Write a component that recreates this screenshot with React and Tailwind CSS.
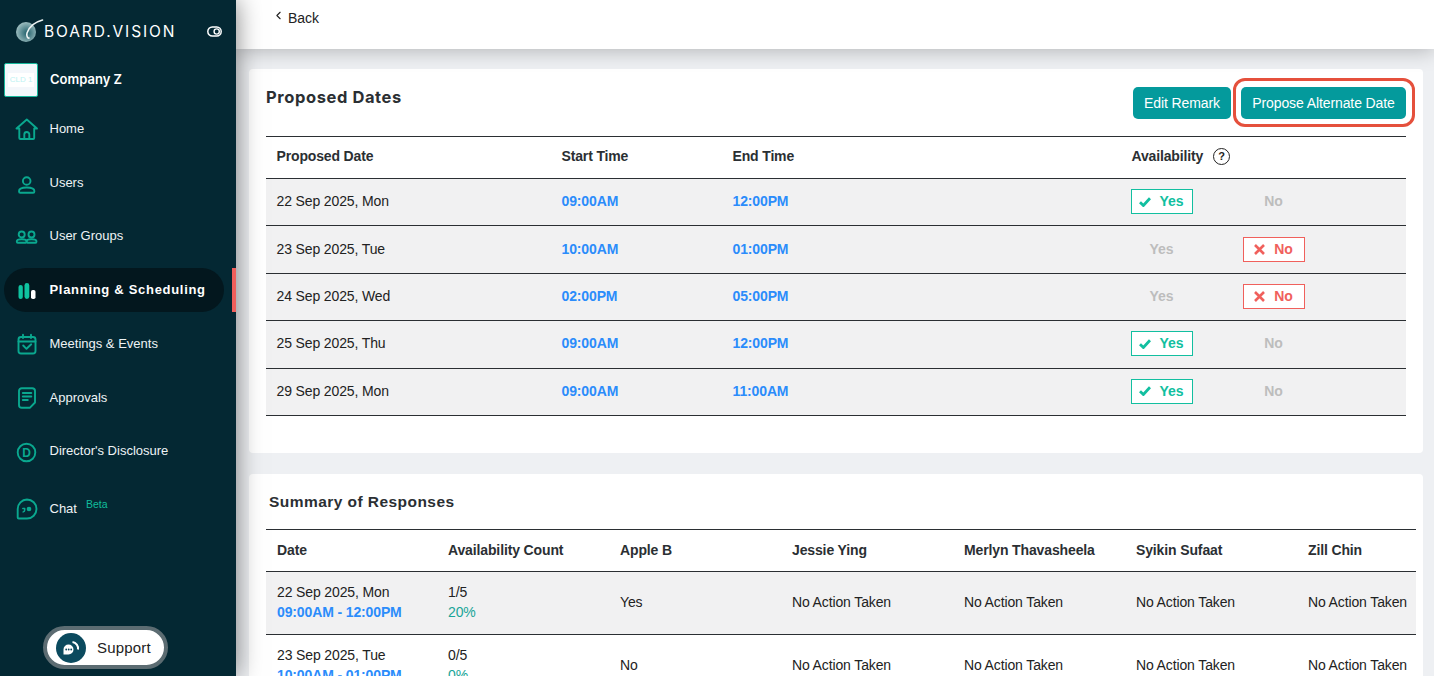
import { ChevronLeft } from "lucide-react";

const navItems = [
  { label: "Home", icon: "home" },
  { label: "Users", icon: "user" },
  { label: "User Groups", icon: "users" },
  { label: "Planning & Scheduling", icon: "bars", active: true },
  { label: "Meetings & Events", icon: "calendar" },
  { label: "Approvals", icon: "doc" },
  { label: "Director's Disclosure", icon: "disclosure" },
];

const proposed = [
  { date: "22 Sep 2025, Mon", start: "09:00AM", end: "12:00PM", yes: true },
  { date: "23 Sep 2025, Tue", start: "10:00AM", end: "01:00PM", yes: false },
  { date: "24 Sep 2025, Wed", start: "02:00PM", end: "05:00PM", yes: false },
  { date: "25 Sep 2025, Thu", start: "09:00AM", end: "12:00PM", yes: true },
  { date: "29 Sep 2025, Mon", start: "09:00AM", end: "11:00AM", yes: true },
];

const people = ["Apple B", "Jessie Ying", "Merlyn Thavasheela", "Syikin Sufaat", "Zill Chin"];

const summary = [
  { date: "22 Sep 2025, Mon", time: "09:00AM - 12:00PM", count: "1/5", pct: "20%", first: "Yes" },
  { date: "23 Sep 2025, Tue", time: "10:00AM - 01:00PM", count: "0/5", pct: "0%", first: "No" },
];

function NavIcon({ name }) {
  const common = {
    width: 26,
    height: 26,
    viewBox: "0 0 26 26",
    fill: "none",
    stroke: "#0aa88f",
    strokeWidth: 1.9,
    strokeLinecap: "round",
    strokeLinejoin: "round",
  };
  if (name === "home") {
    return (
      <svg {...common}>
        <path d="M2.500 12.500 12.800 3.500l10.200 9h-2.800V22a1 1 0 0 1-1 1H6.300a1 1 0 0 1-1-1v-9.500z" />
        <path d="M10.300 23v-4.500a2.500 2.500 0 0 1 5 0V23" />
      </svg>
    );
  }
  if (name === "user") {
    return (
      <svg {...common}>
        <circle cx="12.700" cy="11" r="3.800" />
        <path d="M5 21.200c0-2.600 3-3.700 7.700-3.700s7.700 1.100 7.700 3.700c0 1-.5 1.600-1.300 1.600H6.300c-.8 0-1.300-.6-1.300-1.600z" />
      </svg>
    );
  }
  if (name === "users") {
    return (
      <svg {...common}>
        <circle cx="7.700" cy="11.500" r="3" />
        <circle cx="17.500" cy="11.500" r="3" />
        <path d="M2.800 18.400c0-1.400 2.200-2.100 4.900-2.100s4.900.7 4.900 2.100c0 .9-.4 1.400-1 1.400H3.800c-.6 0-1-.5-1-1.400z" />
        <path d="M12.600 18.400c0-1.400 2.200-2.100 4.900-2.100s5 .7 5 2.100c0 .9-.4 1.400-1 1.400h-7.900" />
      </svg>
    );
  }
  if (name === "bars") {
    return (
      <svg width="26" height="26" viewBox="0 0 26 26">
        <rect x="4.500" y="8" width="4.300" height="14" rx="2.100" fill="#0fc3a0" />
        <rect x="10.500" y="6" width="4.800" height="16" rx="2.400" fill="#0fc3a0" />
        <rect x="17" y="13" width="4.500" height="9" rx="1.800" fill="#ffffff" />
      </svg>
    );
  }
  if (name === "calendar") {
    return (
      <svg {...common}>
        <rect x="4.500" y="6" width="17" height="16.500" rx="2.500" />
        <path d="M4.500 10.500h17M9 3.800V7M17 3.800V7" />
        <path d="m9.200 14.500 3.300 3.300 4.700-4.500" />
      </svg>
    );
  }
  if (name === "doc") {
    return (
      <svg {...common}>
        <path d="M5 7a2.800 2.800 0 0 1 2.800-2.800h10.400A2.800 2.800 0 0 1 21 7v11.500L15.800 23.800H7.800A2.800 2.800 0 0 1 5 21z" />
        <path d="M8.800 9h8.500M8.800 12.500h8.500M8.800 16h5" />
      </svg>
    );
  }
  if (name === "disclosure") {
    return (
      <svg {...common}>
        <circle cx="12.500" cy="14.500" r="8.800" />
        <text x="12.500" y="19" textAnchor="middle" fontFamily="Liberation Sans, sans-serif" fontSize="12" fontWeight="700" fill="#0aa88f" stroke="none">
          D
        </text>
      </svg>
    );
  }
  return (
    <svg {...common}>
      <path d="M13 3.500a9.500 9.500 0 0 1 0 19H4.700c-.6 0-1-.4-1-1V13A9.500 9.500 0 0 1 13 3.500z" />
      <path d="M8.800 12.500h1.900v1.400c0 1-.6 1.700-1.500 2" strokeWidth="1.500" />
      <circle cx="15" cy="13" r="1.400" fill="#0aa88f" />
    </svg>
  );
}

function Sidebar() {
  return (
    <aside className="relative z-20 flex w-[236px] shrink-0 flex-col bg-[#042833] shadow-[0_0_24px_rgba(0,0,0,0.5)]">
      {/* logo */}
      <div className="flex h-[63px] items-center pr-[14px] pl-[15px]">
        <svg width="29" height="28" viewBox="0 0 29 28" className="shrink-0">
          <defs>
            <radialGradient id="logoBall" cx="0.550" cy="0.550" r="0.600">
              <stop offset="0" stopColor="#1f5f6a" />
              <stop offset="1" stopColor="#a6c4c6" />
            </radialGradient>
          </defs>
          <circle cx="11" cy="14" r="10" fill="url(#logoBall)" />
          <path d="M27.500 2C20 4 14 9 12 15c-.8 3 .8 5.500 2 5" fill="none" stroke="#eef4f4" strokeWidth="1.600" strokeLinecap="round" />
        </svg>
        <span className="font-['Inter',sans-serif] text-[15.500px] font-normal tracking-[1.900px] whitespace-nowrap text-white">
          BOARD.VISION
        </span>
        <svg width="15" height="11" viewBox="0 0 15 11" className="ml-auto shrink-0">
          <rect x="0.800" y="1" width="13.400" height="9" rx="4.500" fill="none" stroke="#fff" strokeWidth="1.500" />
          <circle cx="9.700" cy="5.500" r="2.600" fill="none" stroke="#fff" strokeWidth="1.400" />
        </svg>
      </div>

      {/* company */}
      <div className="flex h-[34px] items-center pl-[4px]">
        <div className="flex h-[34px] w-[34px] items-center justify-center rounded-[2px] border border-[#17b89c] bg-[#f4f7fb]">
          <span className="bg-white px-[2px] font-['Liberation_Sans',sans-serif] text-[8px] leading-[14px] whitespace-nowrap text-[#bdf2f2]">CLD 1</span>
        </div>
        <span className="ml-[12px] font-['Inter',sans-serif] text-[13px] font-semibold text-white">Company Z</span>
      </div>

      {/* nav */}
      <nav className="mt-[5px] flex flex-col font-['Liberation_Sans',sans-serif]">
        {navItems.map((item) => (
          <div key={item.label} className="relative flex h-[53.700px] items-center">
            {item.active && <div className="absolute top-[5px] left-[4px] h-[44px] w-[220px] rounded-[22px] bg-[#03171e]" />}
            {item.active && <div className="absolute top-[5px] right-0 h-[44px] w-[4px] bg-[#f0605c]" />}
            <div className="relative ml-[14px] w-[35.500px]">
              <NavIcon name={item.icon} />
            </div>
            <span className={item.active ? "relative text-[13px] font-bold tracking-[0.700px] text-white" : "relative text-[13px] text-[#eef3f5]"}>
              {item.label}
            </span>
          </div>
        ))}
        <div className="mt-[4px] flex h-[53.700px] items-center">
          <div className="ml-[14px] w-[35.500px]">
            <NavIcon name="chat" />
          </div>
          <span className="text-[13px] text-[#eef3f5]">Chat</span>
          <span className="mb-[8px] ml-[9px] text-[10.500px] text-[#10bd9c]">Beta</span>
        </div>
      </nav>

      {/* support */}
      <div className="mt-auto mb-[7px] ml-[43px] flex h-[43px] w-[125px] items-center rounded-full border-[4px] border-[#5c6c72] bg-white pl-[9px] font-['Liberation_Sans',sans-serif]">
        <div className="flex h-[30px] w-[30px] items-center justify-center rounded-full bg-[#0b4a5e]">
          <svg width="18" height="14" viewBox="0 0 18 14">
            <path d="M6.500 3.500a5 5 0 0 1 0 10H1.500V8.500a5 5 0 0 1 5-5z" fill="#fff" />
            <circle cx="4.200" cy="8.500" r="0.900" fill="#0b4a5e" />
            <circle cx="6.700" cy="8.500" r="0.900" fill="#0b4a5e" />
            <circle cx="9.200" cy="8.500" r="0.900" fill="#0b4a5e" />
            <path d="M10.500 1a6.500 6.500 0 0 1 5.500 7.500" fill="none" stroke="#fff" strokeWidth="2" />
          </svg>
        </div>
        <span className="mt-[1px] ml-[11px] text-[15px] tracking-[0.200px] text-[#222]">Support</span>
      </div>
    </aside>
  );
}

function Choice({ label, state }) {
  if (state === "yes") {
    return (
      <div className="flex h-[25px] w-[62px] items-center justify-center gap-[8px] border-[1.500px] border-[#12bfa0] bg-white text-[14px] font-bold text-[#12bfa0]">
        <svg width="12" height="10" viewBox="0 0 12 10">
          <path d="M1 5.200 4.400 8.500 11 1.300" fill="none" stroke="#12bfa0" strokeWidth="2.800" />
        </svg>
        Yes
      </div>
    );
  }
  if (state === "no") {
    return (
      <div className="flex h-[25px] w-[62px] items-center justify-center gap-[9px] border-[1.500px] border-[#f0605c] bg-white text-[14px] font-bold text-[#f0605c]">
        <svg width="11" height="11" viewBox="0 0 11 11">
          <path d="M1 1l9 9M10 1l-9 9" fill="none" stroke="#f0605c" strokeWidth="2.600" />
        </svg>
        No
      </div>
    );
  }
  return <div className="flex h-[25px] w-[62px] items-center justify-center text-[14px] font-bold text-[#bdbdbd]">{label}</div>;
}

function ProposedDates() {
  return (
    <section className="h-[384px] shrink-0 rounded-[4px] bg-white pt-[18px] pr-[17px] pl-[17px]">
      <div className="flex h-[49px] items-start">
        <h2 className="font-['Inter',sans-serif] text-[16.500px] leading-[21px] font-bold tracking-[0.600px] text-[#2b2f33]">Proposed Dates</h2>
        <div className="relative ml-auto flex gap-[10px]">
          <button className="h-[32px] w-[98px] rounded-[5px] bg-[#049a9c] text-[14px] tracking-[-0.100px] text-white">Edit Remark</button>
          <button className="h-[32px] w-[165px] rounded-[5px] bg-[#049a9c] text-[14px] tracking-[-0.100px] text-white">Propose Alternate Date</button>
          <div className="absolute top-[-9px] right-[-9px] h-[49px] w-[182px] rounded-[12px] border-[3.500px] border-[#e5503c]" />
        </div>
      </div>

      <div className="grid h-[43px] grid-cols-[285px_171px_399px_1fr] items-center border-y border-[#2b2f33] pb-[2px] pl-[10.500px] text-[14px] font-bold tracking-[-0.150px] text-[#2b2f33]">
        <div>Proposed Date</div>
        <div>Start Time</div>
        <div>End Time</div>
        <div className="flex items-center">
          Availability
          <span className="ml-[10px] flex h-[17px] w-[17px] items-center justify-center rounded-full border-[1.500px] border-[#222] text-[11px] font-bold text-[#222]">?</span>
        </div>
      </div>

      {proposed.map((row) => (
        <div key={row.date} className="grid h-[47.400px] grid-cols-[285px_171px_399px_1fr] items-center border-b border-[#2b2f33] bg-[#f1f1f2] pb-[1px] pl-[10.500px] text-[14px] tracking-[-0.130px] text-[#222]">
          <div>{row.date}</div>
          <div className="font-bold text-[#2b8cfb]">{row.start}</div>
          <div className="font-bold text-[#2b8cfb]">{row.end}</div>
          <div className="-ml-[1px] flex gap-[50px] tracking-normal">
            <Choice label="Yes" state={row.yes ? "yes" : "off"} />
            <Choice label="No" state={row.yes ? "off" : "no"} />
          </div>
        </div>
      ))}
    </section>
  );
}

function Summary() {
  return (
    <section className="mt-[21px] shrink-0 rounded-[4px] bg-white pt-[17px] pl-[17px]">
      <h2 className="pl-[3px] text-[15.500px] leading-[21px] font-bold tracking-[0.450px] text-[#2b2f33]">Summary of Responses</h2>
      <div className="mt-[17px] w-[1150px] text-[14px] tracking-[-0.130px]">
        <div className="grid h-[43px] grid-cols-[182px_repeat(6,172px)] items-center border-y border-[#2b2f33] font-bold text-[#2b2f33]">
          <div className="pl-[11px]">Date</div>
          <div>Availability Count</div>
          {people.map((name) => (
            <div key={name}>{name}</div>
          ))}
        </div>
        {summary.map((row, i) => (
          <div
            key={row.date}
            className={
              i === 0
                ? "grid h-[63px] grid-cols-[182px_repeat(6,172px)] items-center border-b border-[#2b2f33] bg-[#f1f1f2] pb-[2px] leading-[20.500px] text-[#222]"
                : "grid h-[63px] grid-cols-[182px_repeat(6,172px)] items-center border-b border-[#2b2f33] pb-[2px] leading-[20.500px] text-[#222]"
            }
          >
            <div className="pl-[11px]">
              <div>{row.date}</div>
              <div className="font-bold whitespace-nowrap text-[#2b8cfb]">{row.time}</div>
            </div>
            <div>
              <div>{row.count}</div>
              <div className="text-[#1aa598]">{row.pct}</div>
            </div>
            <div>{row.first}</div>
            {people.slice(1).map((name) => (
              <div key={name}>No Action Taken</div>
            ))}
          </div>
        ))}
      </div>
    </section>
  );
}

export default function App() {
  return (
    <div className="flex h-[676px] w-[1434px] overflow-hidden bg-[#eef0f3] font-['Liberation_Sans',sans-serif]">
      <Sidebar />
      <main className="flex min-w-0 flex-1 flex-col">
        <header className="relative z-10 flex h-[49px] shrink-0 items-start bg-white pt-[8px] pl-[36px] text-[14px] text-[#222] shadow-[0_2px_20px_rgba(0,0,0,0.25)]">
          <ChevronLeft size={13} strokeWidth={2} className="mt-[1px]" />
          <span className="ml-[3px]">Back</span>
        </header>
        <div className="flex flex-col pt-[20px] pr-[11px] pl-[13px]">
          <ProposedDates />
          <Summary />
        </div>
      </main>
    </div>
  );
}
